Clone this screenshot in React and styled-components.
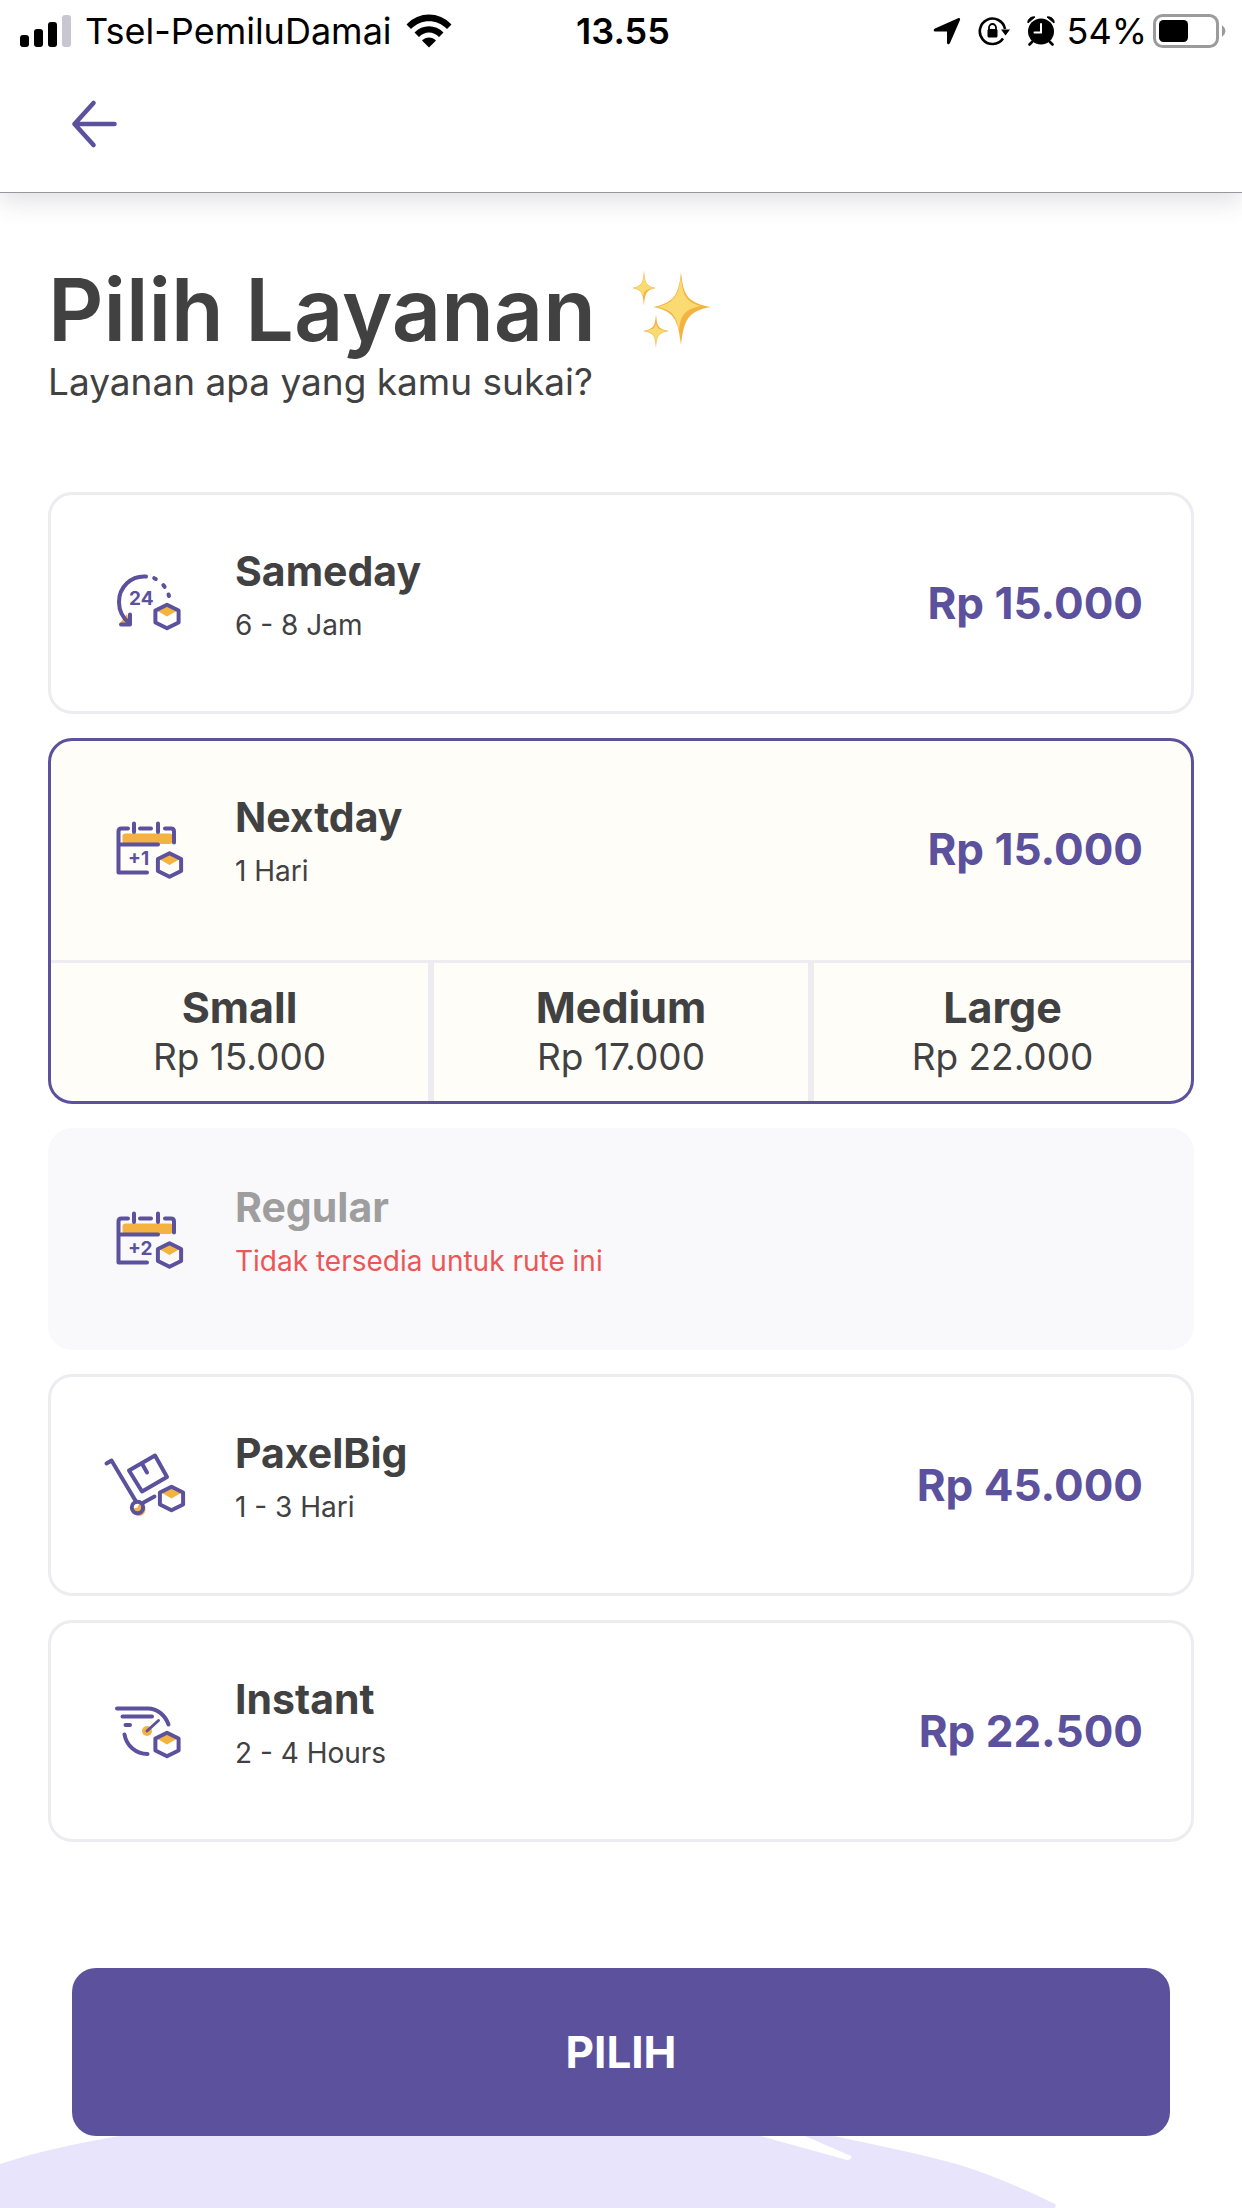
import { useState } from 'react';
import styled, { createGlobalStyle } from 'styled-components';

const COLORS = {
  purple: '#5c519c',
  orange: '#f4b240',
  text: '#414142',
  muted: '#9e9e9e',
  danger: '#eb5757',
  line: '#ececf1',
  lilac: '#e7e4fb',
};

const GlobalStyle = createGlobalStyle`
  * {
    box-sizing: border-box;
  }

  body {
    margin: 0;
    background: #fff;
    color: ${COLORS.text};
    font-family: Inter, 'Liberation Sans', sans-serif;
  }

  h1, h2, p, dl, dt, dd {
    margin: 0;
  }
`;

const Screen = styled.div`
  min-height: 100vh;
  display: flex;
  flex-direction: column;
`;

const Header = styled.header`
  border-bottom: 1px solid #98989b;
  box-shadow: 0 8px 24px rgba(60, 60, 90, 0.16);
`;

const StatusBar = styled.div`
  display: grid;
  grid-template-columns: 1fr auto 1fr;
  align-items: center;
  height: 62px;
  padding: 0 16px 0 20px;
  color: #000;
  font-size: 36px;
  line-height: 40px;
`;

const StatusGroup = styled.div`
  display: flex;
  align-items: center;
  justify-content: ${(props) => (props.$end ? 'flex-end' : 'flex-start')};
  gap: ${(props) => (props.$end ? '6px' : '14px')};
`;

const StatusIcons = styled.div`
  display: flex;
  align-items: center;
  gap: 17px;
  margin-right: 6px;
`;

const Time = styled.span`
  font-weight: 600;
`;

const NavBar = styled.nav`
  display: flex;
  align-items: center;
  height: 130px;
  padding: 0 60px 6px;
`;

const BackButton = styled.button`
  display: flex;
  padding: 8px;
  border: 0;
  background: none;
  color: ${COLORS.purple};
`;

const Main = styled.main`
  padding: 69px 48px 0;
`;

const TitleRow = styled.div`
  display: flex;
  align-items: center;
  gap: 36px;
`;

const Title = styled.h1`
  font-size: 86px;
  line-height: 96px;
  font-weight: 600;
`;

const Subtitle = styled.p`
  margin-bottom: 86px;
  font-size: 37px;
  line-height: 48px;
`;

const ServiceList = styled.div`
  display: flex;
  flex-direction: column;
  gap: 24px;
`;

const Card = styled.label`
  display: block;
  overflow: hidden;
  border: 3px solid ${(props) => (props.$selected ? COLORS.purple : COLORS.line)};
  border-radius: 24px;
  background: ${(props) => (props.$selected ? '#fefdf8' : '#fff')};

  ${(props) =>
    props.$disabled &&
    `
    border-color: #f9f9fc;
    background: #f9f9fc;
  `}
`;

const Radio = styled.input`
  position: absolute;
  appearance: none;
  width: 0;
  height: 0;
  margin: 0;
`;

const Service = styled.div`
  display: flex;
  align-items: center;
  height: 216px;
  padding: 0 48px 0 52px;
`;

const ServiceText = styled.div`
  flex: 1;
  margin-left: 48px;
  padding-bottom: 18px;
`;

const Name = styled.h2`
  margin-bottom: 10px;
  font-size: 41px;
  line-height: 52px;
  font-weight: 700;
  color: ${(props) => (props.$disabled ? COLORS.muted : COLORS.text)};
`;

const Detail = styled.p`
  font-size: 28px;
  line-height: 36px;
  color: ${(props) => (props.$disabled ? COLORS.danger : COLORS.text)};
`;

const Price = styled.span`
  font-size: 44px;
  line-height: 52px;
  font-weight: 700;
  color: ${COLORS.purple};
`;

const Sizes = styled.dl`
  display: grid;
  grid-template-columns: repeat(3, 1fr);
  margin-top: 3px;
  border-top: 3px solid ${COLORS.line};
`;

const Size = styled.div`
  padding: 18px 0 20px;
  text-align: center;

  &:not(:first-child) {
    border-left: 3px solid ${COLORS.line};
  }

  &:not(:last-child) {
    border-right: 3px solid ${COLORS.line};
  }
`;

const SizeName = styled.dt`
  font-size: 43px;
  line-height: 52px;
  font-weight: 700;
`;

const SizePrice = styled.dd`
  font-size: 37px;
  line-height: 48px;
`;

const Footer = styled.footer`
  margin-top: 126px;
`;

const ButtonRow = styled.div`
  padding: 0 72px;
`;

const SubmitButton = styled.button`
  display: block;
  width: 100%;
  height: 168px;
  border: 0;
  border-radius: 24px;
  background: ${COLORS.purple};
  color: #fff;
  font-family: inherit;
  font-size: 44px;
  font-weight: 700;
`;

const Wave = styled.svg`
  display: block;
  width: 100%;
  height: 72px;
`;

const IconSvg = styled.svg`
  flex: none;
  fill: none;
  stroke: ${COLORS.purple};
  stroke-width: 4;
  stroke-linecap: round;
  stroke-linejoin: round;
`;

const IconText = styled.text`
  fill: ${COLORS.purple};
  stroke: none;
  font-size: 19px;
  font-weight: 700;
`;

function ServiceIcon({ children }) {
  return (
    <IconSvg width="84" height="84" viewBox="0 0 84 84" aria-hidden="true">
      {children}
    </IconSvg>
  );
}

function Package({ x, y }) {
  return (
    <g transform={`translate(${x} ${y})`}>
      <path d="M-9.5 -5.5 0 -11 9.5 -5.5 0 0Z" fill={COLORS.orange} stroke="none" />
      <path d="M0 -11.7 11.6 -6V6L0 11.7 -11.6 6V-6Z" />
    </g>
  );
}

function SamedayIcon() {
  return (
    <ServiceIcon>
      <path d="M17 62 24 53 27 63Z" fill={COLORS.orange} stroke="none" />
      <path d="M43 15.5C28 14.5 16 26 16 41C16 49 20 57 26 62" />
      <path d="M18 63.5H27V53.5M51.2 17.2 52.8 18M60.4 24.2 61.6 25.8M65.5 33.5 66 35" />
      <IconText x="26" y="44">
        24
      </IconText>
      <Package x={64} y={55.5} />
    </ServiceIcon>
  );
}

function CalendarIcon({ days }) {
  return (
    <ServiceIcon>
      <rect x="19.5" y="26.5" width="50" height="10.5" rx="3" fill={COLORS.orange} stroke="none" />
      <path d="M25 21.5H18.5Q15.5 21.5 15.5 24.5V65.5H44M15.5 37.5H55" />
      <path d="M37 21.5H48M62 21.5H68Q71 21.5 71 24.5V35.5" />
      <path d="M31 16.5V25M55 16.5V25" />
      <IconText x="25" y="58">
        +{days}
      </IconText>
      <Package x={66.5} y={58} />
    </ServiceIcon>
  );
}

function TrolleyIcon() {
  return (
    <ServiceIcon>
      <circle cx="36" cy="66.5" r="6.5" fill={COLORS.orange} stroke="none" />
      <path d="M34.5 64.5 29 66 29 59 37 59Z" fill="#fff" stroke="none" />
      <path d="M3.5 20.5 8.5 17.5 33 58.5M40.5 59.5 51.5 53.5" />
      <path d="M26 27.5 52 12.5 64 34 39 48.5ZM39.5 21.5 44 29.5" />
      <circle cx="34.5" cy="64.5" r="5.7" />
      <Package x={68.5} y={55.5} />
    </ServiceIcon>
  );
}

function InstantIcon() {
  return (
    <ServiceIcon>
      <circle cx="44" cy="42" r="5" fill={COLORS.orange} stroke="none" />
      <path d="M14 19.5H45C54 19.5 62 26 65.5 35.5M19.5 27.5H49M22.5 36H27" />
      <path d="M21.5 45.5C23.5 57 33 65 44.5 65" />
      <path d="M44 42 55.5 31.5" strokeWidth="3" />
      <Package x={64} y={55.5} />
    </ServiceIcon>
  );
}

function Sparkles() {
  return (
    <svg width="80" height="80" viewBox="0 0 80 80" aria-hidden="true">
      <g fill={COLORS.orange}>
        <path d="M49 2C51 23 54 33 79 37C55 41 52 51 49 75C46 51 43 41 21 37C43 33 47 23 49 2Z" />
        <path d="M12 0C13 13 14 16 24 18C14 20 13 23 12 36C11 23 10 20 0 18C10 16 11 13 12 0Z" />
        <path d="M24 44C25 56 26 59 37 61C26 63 25 66 24 78C23 66 22 63 11 61C22 59 23 56 24 44Z" />
      </g>
      <g fill="#fadb71">
        <path d="M49 5C50 23 53 32 69 36C54 39 48 44 47 62C45 48 42 40 25 37C43 33 47 24 49 5Z" />
        <path d="M12 3C13 13 14 16 22 18C14 19 12 21 11 27C10 22 9 20 2 18C10 16 11 13 12 3Z" />
        <path d="M24 53C25 58 27 60 34 61C26 63 25 66 24 75C23 66 22 63 14 61C22 59 23 58 24 53Z" />
      </g>
    </svg>
  );
}

function SignalIcon() {
  return (
    <svg width="51" height="34" viewBox="0 0 51 34" aria-hidden="true">
      <rect x="0" y="21" width="9" height="12" rx="3" />
      <rect x="14" y="15" width="9" height="18" rx="3" />
      <rect x="28" y="8" width="9" height="25" rx="3" />
      <rect x="42" y="1" width="9" height="32" rx="3" fill="#c8c7d1" />
    </svg>
  );
}

function WifiIcon() {
  return (
    <svg width="46" height="34" viewBox="0 0 46 34" aria-hidden="true">
      <path d="M0.5 10.5C13 -2.8 33 -2.8 45.5 10.5L41 15C31 4.5 15 4.5 5 15Z" />
      <path d="M8.5 18.5C16.5 10 29.5 10 37.5 18.5L33 23C27.5 17 18.5 17 13 23Z" />
      <path d="M16 26.5C20 22.5 26 22.5 30 26.5L23 33.5Z" />
    </svg>
  );
}

function LocationIcon() {
  return (
    <svg width="28" height="28" viewBox="0 0 28 28" aria-hidden="true">
      <path d="M25 1.2C26.5 0.5 27.5 1.5 27 3L17 26C16 28 14 27.5 14 25.5V14.5H2.5C0.5 14.5 0 12.5 2 11.5Z" />
    </svg>
  );
}

function RotationLockIcon() {
  return (
    <svg width="32" height="30" viewBox="0 0 32 30" aria-hidden="true">
      <g fill="none" stroke="#000" strokeWidth="2.6">
        <path d="M27 13A12.7 12.7 0 1 0 25 22.5" />
        <path d="M11 14V11.5A3.5 3.5 0 0 1 18 11.5V14" strokeWidth="1.8" />
      </g>
      <path d="M23 13.5H32L27.5 19.5Z" />
      <rect x="9.5" y="13" width="10" height="8.5" rx="1.5" />
    </svg>
  );
}

function AlarmIcon() {
  return (
    <svg width="28" height="30" viewBox="0 0 28 30" aria-hidden="true">
      <path d="M1 7C0 4 4 0 8 1ZM27 7C28 4 24 0 20 1Z" stroke="#000" strokeLinejoin="round" />
      <circle cx="14" cy="15.5" r="13" />
      <path d="M5 26 2.5 28.5M23 26 25.5 28.5" stroke="#000" strokeWidth="2.6" strokeLinecap="round" />
      <path d="M14 8V16.5H7.5" fill="none" stroke="#fff" strokeWidth="2" strokeLinecap="round" />
    </svg>
  );
}

function BatteryIcon() {
  return (
    <svg width="73" height="34" viewBox="0 0 73 34" aria-hidden="true">
      <rect x="1.5" y="1.5" width="63" height="31" rx="8" fill="none" stroke="#9b9b9b" strokeWidth="3" />
      <rect x="6" y="6" width="29" height="22" rx="4.5" />
      <path d="M69 11Q76 17 69 23Z" fill="#9b9b9b" />
    </svg>
  );
}

const SERVICES = [
  { id: 'sameday', name: 'Sameday', detail: '6 - 8 Jam', price: 'Rp 15.000', icon: <SamedayIcon /> },
  {
    id: 'nextday',
    name: 'Nextday',
    detail: '1 Hari',
    price: 'Rp 15.000',
    icon: <CalendarIcon days={1} />,
    sizes: [
      { name: 'Small', price: 'Rp 15.000' },
      { name: 'Medium', price: 'Rp 17.000' },
      { name: 'Large', price: 'Rp 22.000' },
    ],
  },
  {
    id: 'regular',
    name: 'Regular',
    detail: 'Tidak tersedia untuk rute ini',
    icon: <CalendarIcon days={2} />,
    disabled: true,
  },
  { id: 'paxelbig', name: 'PaxelBig', detail: '1 - 3 Hari', price: 'Rp 45.000', icon: <TrolleyIcon /> },
  { id: 'instant', name: 'Instant', detail: '2 - 4 Hours', price: 'Rp 22.500', icon: <InstantIcon /> },
];

function ServiceCard({ service, selected, onSelect }) {
  return (
    <Card $selected={selected} $disabled={service.disabled}>
      <Radio
        type="radio"
        name="service"
        value={service.id}
        checked={selected}
        disabled={service.disabled}
        onChange={() => onSelect(service.id)}
      />
      <Service>
        {service.icon}
        <ServiceText>
          <Name $disabled={service.disabled}>{service.name}</Name>
          <Detail $disabled={service.disabled}>{service.detail}</Detail>
        </ServiceText>
        {service.price && <Price>{service.price}</Price>}
      </Service>
      {selected && service.sizes && (
        <Sizes>
          {service.sizes.map((size) => (
            <Size key={size.name}>
              <SizeName>{size.name}</SizeName>
              <SizePrice>{size.price}</SizePrice>
            </Size>
          ))}
        </Sizes>
      )}
    </Card>
  );
}

export default function App() {
  const [selected, setSelected] = useState('nextday');

  return (
    <Screen>
      <GlobalStyle />
      <Header>
        <StatusBar>
          <StatusGroup>
            <SignalIcon />
            <span>Tsel-PemiluDamai</span>
            <WifiIcon />
          </StatusGroup>
          <Time>13.55</Time>
          <StatusGroup $end>
            <StatusIcons>
              <LocationIcon />
              <RotationLockIcon />
              <AlarmIcon />
            </StatusIcons>
            <span>54%</span>
            <BatteryIcon />
          </StatusGroup>
        </StatusBar>
        <NavBar>
          <BackButton type="button" aria-label="Kembali">
            <svg width="52" height="52" viewBox="0 0 52 52" fill="none" stroke="currentColor" strokeWidth="4.6" strokeLinecap="round" strokeLinejoin="round">
              <path d="M25.5 5 6.500 26 25.5 47M6.500 26H46.5" />
            </svg>
          </BackButton>
        </NavBar>
      </Header>
      <Main>
        <TitleRow>
          <Title>Pilih Layanan</Title>
          <Sparkles />
        </TitleRow>
        <Subtitle>Layanan apa yang kamu sukai?</Subtitle>
        <ServiceList>
          {SERVICES.map((service) => (
            <ServiceCard
              key={service.id}
              service={service}
              selected={selected === service.id}
              onSelect={setSelected}
            />
          ))}
        </ServiceList>
      </Main>
      <Footer>
        <ButtonRow>
          <SubmitButton type="button">PILIH</SubmitButton>
        </ButtonRow>
        <Wave viewBox="0 0 1242 72" preserveAspectRatio="none" aria-hidden="true">
          <path
            d="M0 28C36 16 78 7 119 0H760L847 24Q853 23 851 20L805 0H834C876 9 920 18 960 29Q1004 43 1055 68Q1057 71 1054 72H0Z"
            fill={COLORS.lilac}
          />
        </Wave>
      </Footer>
    </Screen>
  );
}
